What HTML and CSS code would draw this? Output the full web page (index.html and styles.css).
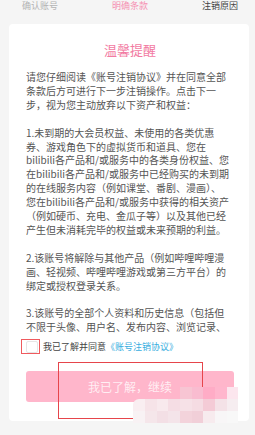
FILE: index.html
```html
<!DOCTYPE html>
<html lang="zh">
<head>
<meta charset="utf-8">
<title>明确条款</title>
<link rel="stylesheet" href="styles.css">
</head>
<body>
<nav class="steps">
  <span class="step done">确认账号</span>
  <span class="step current">明确条款</span>
  <span class="step">注销原因</span>
</nav>
<main class="card">
  <h1 class="title">温馨提醒</h1>
  <div class="terms">
    <p>请您仔细阅读《账号注销协议》并在同意全部条款后方可进行下一步注销操作。点击下一步，视为您主动放弃以下资产和权益：</p>
    <p>1.未到期的大会员权益、未使用的各类优惠券、游戏角色下的虚拟货币和道具、您在bilibili各产品和/或服务中的各类身份权益、您在bilibili各产品和/或服务中已经购买的未到期的在线服务内容（例如课堂、番剧、漫画）、您在bilibili各产品和/或服务中获得的相关资产（例如硬币、充电、金瓜子等）以及其他已经产生但未消耗完毕的权益或未来预期的利益。</p>
    <p>2.该账号将解除与其他产品（例如哔哩哔哩漫画、轻视频、哔哩哔哩游戏或第三方平台）的绑定或授权登录关系。</p>
    <p>3.该账号的全部个人资料和历史信息（包括但不限于头像、用户名、发布内容、浏览记录、关注、收藏）都将无法找回，且无法恢复。</p>
  </div>
  <div class="agree"><span class="box"></span><span class="agree-text">我已了解并同意</span><span class="link">《账号注销协议》</span></div>
  <button class="continue" type="button">我已了解，继续</button>
</main>
<div class="mark mark-box"></div>
<div class="mark mark-btn"></div>
<div class="mosaic">
  <i></i><i></i><i></i><i></i><i class="a4"></i><i class="a5"></i><i class="a6"></i><i class="a7"></i><i class="a8"></i>
  <i class="b0"></i><i class="b1"></i><i class="b2"></i><i class="b3"></i><i class="b4"></i><i class="b5"></i><i class="b6"></i><i class="b7"></i><i class="b8"></i>
  <i class="c0"></i><i class="c1"></i><i class="c2"></i><i class="c3"></i><i class="c4"></i><i class="c5"></i><i class="c6"></i><i class="c7"></i><i class="c8"></i>
</div>
</body>
</html>
```

FILE: styles.css
```css
html, body {
  margin: 0;
  padding: 0;
}
body {
  position: relative;
  width: 255px;
  height: 435px;
  overflow: hidden;
  background: #f5f5f5;
  font-family: "Noto Sans CJK SC", "Noto Sans", sans-serif;
  color: #555;
}
.steps {
  display: flex;
  box-sizing: border-box;
  height: 24px;
  padding: 1px 0 0 22px;
  gap: 54px;
  font-size: 9px;
  line-height: 9px;
}
.step {
  color: #444;
}
.step.done {
  color: #b3b3b3;
}
.step.current {
  color: #f590b2;
}
.card {
  margin: 0 6px 0 9px;
  padding: 18px 15px 19px 17px;
  background: #fff;
  border-radius: 4px;
  display: flex;
  flex-direction: column;
}
.title {
  margin: 0 0 12px;
  font-size: 13px;
  line-height: 16px;
  font-weight: normal;
  text-align: center;
  color: #f27aa2;
}
.terms {
  width: 204px;
  height: 264px;
  overflow: hidden;
  font-size: 10px;
  line-height: 13.9px;
  color: #555;
}
.terms p {
  margin: 0 0 13.9px;
}
.agree {
  display: flex;
  align-items: center;
  height: 13px;
  margin-top: 6px;
  font-size: 9px;
  line-height: 13px;
}
.box {
  flex: none;
  width: 12px;
  height: 12px;
  box-sizing: border-box;
  border: 1px solid #e6e6e6;
  border-radius: 2px;
  background: #fff;
  margin-right: 5px;
}
.agree-text {
  color: #444;
}
.link {
  color: #3aaee0;
}
.continue {
  margin-top: 18px;
  width: 208px;
  height: 31px;
  border: 0;
  border-radius: 3px;
  background: #ffb6cb;
  color: rgba(255, 255, 255, 0.78);
  font-family: inherit;
  font-size: 12px;
  line-height: 31px;
  padding: 0;
}
.mark {
  position: absolute;
  box-sizing: border-box;
  border: 1.5px solid #e6454b;
}
.mark-box {
  left: 21px;
  top: 339px;
  width: 19px;
  height: 15px;
  border-color: #ef5a5e;
}
.mark-btn {
  left: 58px;
  top: 362px;
  width: 145px;
  height: 57px;
}
.mosaic {
  position: absolute;
  left: 133.3px;
  top: 387.3px;
  display: grid;
  grid-template-columns: repeat(9, 11.67px);
  grid-template-rows: repeat(3, 12px);
}
.mosaic i { display: block; }
.a4 { background: #f7c5d3; }
.a5 { background: #f9bcd0; }
.a6 { background: #ffacc6; }
.a7 { background: #ffb6cd; }
.a8 { background: #fce6ee; }
.b0 { background: #f9eef1; border-top-left-radius: 6px; }
.b1 { background: #f6e3e8; }
.b2 { background: #f8e9ed; }
.b3 { background: #f5dde4; }
.b4 { background: #f6e1e7; }
.b5 { background: #f5dce3; }
.b6 { background: #f4cbd6; }
.b7 { background: #f4e2e7; }
.b8 { background: #f6edf0; }
.c0 { background: #f8f2f4; }
.c1 { background: #f5e6ea; }
.c2 { background: #f3dfe5; }
.c3 { background: #f4e4e9; }
.c4 { background: #f3d3db; }
.c5 { background: #f1cfd8; }
.c6 { background: #f7ebee; }
.c7 { background: #f8f6f7; }
.c8 { background: #f8f8f8; }
```
